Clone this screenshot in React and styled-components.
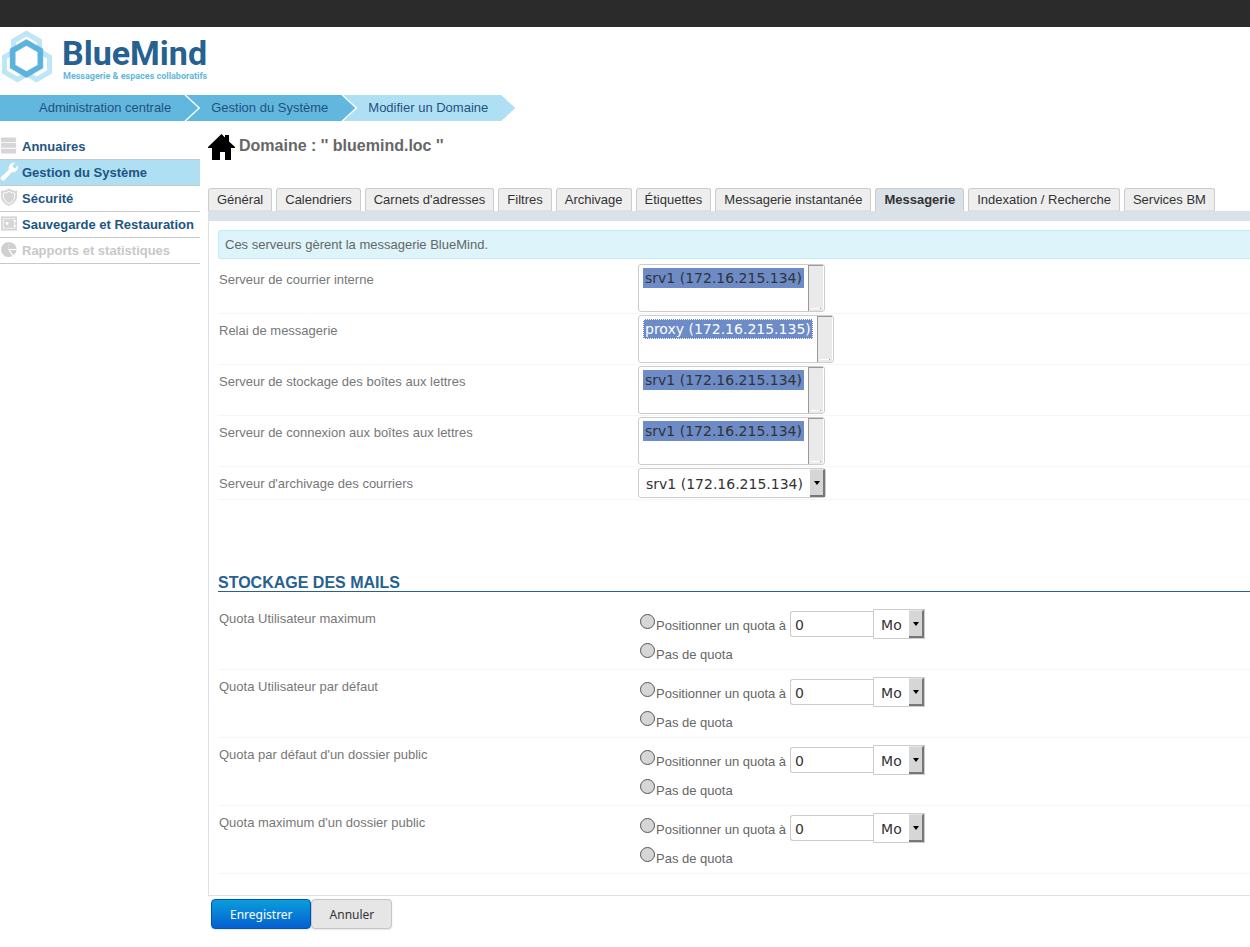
import React, { useState } from "react";
import styled, { createGlobalStyle, css } from "styled-components";

const sans = '"Liberation Sans", Arial, sans-serif';
const control = '"DejaVu Sans", sans-serif';

const GlobalStyle = createGlobalStyle`
  *, *::before, *::after { box-sizing: border-box; }
  body {
    margin: 0;
    background: #fff;
    color: #666;
    font: 13px/16px ${sans};
    overflow-x: hidden;
  }
  ul { margin: 0; padding: 0; list-style: none; }
  a { color: inherit; text-decoration: none; }
`;

const TopBar = styled.div`
  height: 27px;
  background: #2b2b2b;
`;

const Header = styled.header`
  display: flex;
  height: 68px;
  padding-top: 3px;
`;

const Hexagons = styled.svg`
  width: 54px;
  height: 54px;
  flex: none;
`;

const Brand = styled.div`
  display: flex;
  flex-direction: column;
  padding: 7px 0 0 8px;
  font-family: Roboto, "Liberation Sans", sans-serif;
  font-weight: bold;
  white-space: nowrap;
`;

const BrandName = styled.span`
  color: #26618f;
  font-size: 34px;
  line-height: 33px;
`;

const Tagline = styled.span`
  padding-left: 1px;
  color: #62b7de;
  font-size: 9px;
  line-height: 12px;
`;

const Crumbs = styled.ul`
  display: flex;
  height: 26px;
`;

const Crumb = styled.li`
  padding: 0 27px 0 25px;
  margin-left: -12px;
  background: ${(p) => (p.$current ? "#afdff3" : "#62b7de")};
  color: #1f5280;
  line-height: 26px;
  white-space: nowrap;
  clip-path: polygon(0 0, calc(100% - 14px) 0, 100% 50%, calc(100% - 14px) 100%, 0 100%, 14px 50%);
  &:first-child {
    margin-left: 0;
    padding-left: 39px;
    clip-path: polygon(0 0, calc(100% - 14px) 0, 100% 50%, calc(100% - 14px) 100%, 0 100%);
  }
`;

const Columns = styled.div`
  display: flex;
  align-items: flex-start;
  gap: 8px;
  padding-top: 13px;
`;

const SideNav = styled.nav`
  flex: none;
  width: 200px;
`;

const SideLink = styled.a`
  display: flex;
  align-items: center;
  gap: 4px;
  height: 26px;
  border-bottom: 1px solid #c8c8c8;
  background: ${(p) => (p.$active ? "#afdff3" : "transparent")};
  color: ${(p) => (p.$disabled ? "#c8c8c8" : "#1d5583")};
  font-weight: bold;
  white-space: nowrap;
  svg { flex: none; width: 18px; height: 20px; margin-top: -4px; }
`;

const Content = styled.main`
  flex: 1;
  min-width: 0;
`;

const PageTitle = styled.h1`
  display: flex;
  align-items: flex-start;
  gap: 4px;
  height: 54px;
  margin: 0;
  font-size: 16px;
  line-height: 24px;
  svg { width: 27px; height: 27px; }
`;

const Tabs = styled.div`
  display: flex;
  gap: 4px;
  border-bottom: 10px solid #dae2e8;
`;

const Tab = styled.button`
  height: 23px;
  padding: 0 8px;
  border: 1px solid #ccc;
  border-bottom-color: #dae2e8;
  border-radius: 3px 3px 0 0;
  background: ${(p) => (p.$active ? "#dae2e8" : "#eee")};
  color: #333;
  font: ${(p) => (p.$active ? "bold" : "normal")} 13px/21px ${sans};
  white-space: nowrap;
`;

const Panel = styled.section`
  padding: 9px 0 21px 9px;
  border-left: 1px solid #dae2e8;
  border-bottom: 1px solid #dae2e8;
`;

const Notice = styled.p`
  margin: 0 0 4px;
  padding: 6px 6px 5px;
  border: 1px solid #c1ebf6;
  border-right: 0;
  border-radius: 3px 0 0 3px;
  background: #ddf4fa;
`;

const Row = styled.div`
  display: grid;
  grid-template-columns: 420px 1fr;
  padding: ${(p) => (p.$tall ? "7px 0 0" : "1px 0")};
  min-height: ${(p) => (p.$tall ? "68px" : "0")};
  border-bottom: 1px solid #f6f6f6;
`;

const rowLabel = css`
  padding: ${(p) => (p.$tall ? "2px" : "8px")} 1px 0;
  color: #777;
`;
const RowLabel = styled.label`${rowLabel}`;
const RowCaption = styled.span`${rowLabel}`;

const ListFrame = styled.div`
  display: flex;
  justify-self: start;
  height: 48px;
  border: 1px solid #ccc;
  border-radius: 3px;
  background: #fff;
`;

const List = styled.select`
  height: 46px;
  padding: 3px 4px;
  border: 0;
  outline: 0;
  background: transparent;
  overflow: hidden;
  font: 14px/20px ${control};
  option {
    height: 20px;
    min-height: 20px;
    padding: ${(p) => (p.$focused ? "1px 1px 0" : "2px 2px 0")};
    border: ${(p) => (p.$focused ? "1px dotted #fff" : "0")};
    color: ${(p) => (p.$focused ? "#fff" : "#333")};
  }
  option:checked {
    background: #6c8bc7 linear-gradient(#6c8bc7, #6c8bc7);
    color: ${(p) => (p.$focused ? "#fff" : "#333")};
  }
`;

const ScrollTrack = styled.span`
  display: flex;
  align-items: flex-end;
  width: 15px;
  margin-right: 1px;
  padding: 0 2px 2px;
  border-top: 1px solid #999;
  border-left: 1px solid #999;
  background: #eaeaea;
  &::after { content: ""; flex: 1; height: 1px; background: #fff; border-right: 1px solid #999; }
`;

const DropFrame = styled.div`
  display: flex;
  justify-self: start;
  height: 30px;
  border: 1px solid #ccc;
  border-radius: ${(p) => (p.$square ? "0" : "3px")};
  background: #fff;
`;

const Drop = styled.select`
  appearance: none;
  padding: 2px 7px 0;
  border: 0;
  outline: 0;
  background: transparent;
  color: #333;
  font: 14px/20px ${control};
`;

const DropArrow = styled.span`
  display: flex;
  align-items: center;
  justify-content: center;
  width: 15px;
  border-top: 1px solid #e6e6e6;
  border-right: 2px solid #777;
  border-bottom: 2px solid #777;
  background: #d6d6d6;
  pointer-events: none;
  &::after {
    content: "";
    border: 3px solid transparent;
    border-top: 4px solid #000;
    border-bottom: 0;
  }
`;

const SectionTitle = styled.h2`
  margin: 74px 0 10px;
  border-bottom: 1px solid #26618f;
  color: #26618f;
  font-size: 16px;
  line-height: 17px;
  text-transform: uppercase;
`;

const Choice = styled.div`
  display: flex;
  align-items: center;
  min-height: 28px;
`;

const ChoiceLabel = styled.label`
  display: flex;
  align-items: flex-start;
  padding-left: 2px;
  margin-right: 4px;
  white-space: nowrap;
  span { padding-top: 4px; }
`;

const Radio = styled.input.attrs({ type: "radio" })`
  appearance: none;
  width: 15px;
  height: 15px;
  margin: 0 1px 0 0;
  border: 1px solid #555;
  border-radius: 50%;
  background: #d6d6d6;
  &:checked { background: radial-gradient(#333 3px, #d6d6d6 4px); }
`;

const QuotaInput = styled.input`
  width: 83px;
  height: 26px;
  padding: 2px 4px 0;
  border: 1px solid #ccc;
  border-right: 0;
  border-radius: 3px 0 0 3px;
  color: #333;
  font: 14px/20px ${control};
`;

const Actions = styled.div`
  display: flex;
  padding: 3px;
`;

const Button = styled.button`
  height: 30px;
  padding: 2px 17px 0 18px;
  border: 1px solid ${(p) => (p.$primary ? "#0055b3" : "#c5c5c5")};
  border-radius: 4px;
  background: ${(p) => (p.$primary ? "linear-gradient(#0a9ddd, #0460d0)" : "#e6e6e6")};
  box-shadow: 0 1px 2px rgba(0, 0, 0, 0.1);
  color: ${(p) => (p.$primary ? "#fff" : "#333")};
  font: 12px/20px "Noto Sans", sans-serif;
`;

const hex = (cx, cy, r) =>
  [[0, -1], [0.866, -0.5], [0.866, 0.5], [0, 1], [-0.866, 0.5], [-0.866, -0.5]]
    .map(([x, y]) => `${cx + x * r},${cy + y * r}`)
    .join(" ");

function Logo() {
  return (
    <Hexagons viewBox="0 0 54 54" fill="none" aria-hidden="true">
      <g stroke="#bde6f7" strokeWidth="5">
        <polygon points={hex(26.5, 18.5, 15)} />
        <polygon points={hex(17.5, 34.5, 15)} />
        <polygon points={hex(36.5, 34.5, 15)} />
      </g>
      <polygon points={hex(26.5, 28.5, 13)} fill="#fff" />
      <polygon points={hex(26.5, 28.5, 16)} stroke="#4b7f9c" strokeWidth="6" opacity="0.4" />
      <polygon points={hex(26.5, 28.5, 16)} stroke="#5ab4e0" strokeWidth="5" />
    </Hexagons>
  );
}

const icons = {
  directory: (
    <g fill="#d6d6d6">
      <rect x="1" y="2" width="16" height="5" rx="1" />
      <rect x="1" y="8" width="16" height="5" rx="1" />
      <rect x="1" y="14" width="16" height="5" rx="1" />
    </g>
  ),
  system: (
    <path fill="#fff" d="M1.600 19.400a2.200 2.200 0 0 1-.2-3.200L9.300 8.600C8.500 5.100 10.900 1.500 14.600 1l1.200.3-2.600 3.100.8 2 2.200.6 2.600-2.900c1.100 3.900-2.300 7.900-6.400 7.200L4.800 19.400a2.200 2.200 0 0 1-3.200 0z" />
  ),
  security: (
    <g>
      <path fill="#d6d6d6" d="M9.500 1C7 3 4 3.600 1 3.500V9c0 5 3.500 8.500 8.500 10.500C14.500 17.500 18 14 18 9V3.500C15 3.600 12 3 9.500 1z" />
      <path fill="#d6d6d6" stroke="#fff" d="M9.500 4C7.500 5.200 5.500 5.700 3.500 5.800V9c0 3.500 2.200 6.200 6 8 3.800-1.800 6-4.500 6-8V5.800c-2-.1-4-.6-6-1.800z" />
    </g>
  ),
  backup: (
    <g>
      <rect x="1" y="3" width="17" height="15" fill="#d6d6d6" />
      <rect x="3.500" y="5.500" width="12" height="10" fill="#d6d6d6" stroke="#f4f4f4" />
      <circle cx="7.500" cy="10.500" r="1.500" fill="#fff" />
      <path d="M15.500 7v2m0 3v2" stroke="#fff" strokeWidth="2" />
    </g>
  ),
  reports: (
    <g fill="#d0d0d0">
      <path d="M9 2.500a8 8 0 1 0 4 15L9 11z" />
      <path d="M9 2.500V10h8.500A8 8 0 0 0 9 2.500z" />
      <path d="M10.500 11l3.500 5.500a7 7 0 0 0 3.500-5.500z" />
    </g>
  ),
};

const sections = [
  { icon: "directory", label: "Annuaires" },
  { icon: "system", label: "Gestion du Système", active: true },
  { icon: "security", label: "Sécurité" },
  { icon: "backup", label: "Sauvegarde et Restauration" },
  { icon: "reports", label: "Rapports et statistiques", disabled: true },
];

const tabs = [
  "Général", "Calendriers", "Carnets d'adresses", "Filtres", "Archivage", "Étiquettes",
  "Messagerie instantanée", "Messagerie", "Indexation / Recherche", "Services BM",
];

const servers = [
  { id: "internal", label: "Serveur de courrier interne", host: "srv1 (172.16.215.134)" },
  { id: "relay", label: "Relai de messagerie", host: "proxy (172.16.215.135)", focused: true },
  { id: "storage", label: "Serveur de stockage des boîtes aux lettres", host: "srv1 (172.16.215.134)" },
  { id: "access", label: "Serveur de connexion aux boîtes aux lettres", host: "srv1 (172.16.215.134)" },
];

const quotas = [
  { id: "user-max", label: "Quota Utilisateur maximum" },
  { id: "user-default", label: "Quota Utilisateur par défaut" },
  { id: "public-default", label: "Quota par défaut d'un dossier public" },
  { id: "public-max", label: "Quota maximum d'un dossier public" },
];

function ServerRow({ id, label, host, focused }) {
  return (
    <Row>
      <RowLabel htmlFor={id}>{label}</RowLabel>
      <ListFrame>
        <List id={id} multiple size={2} defaultValue={[host]} $focused={focused}>
          <option value={host}>{host}</option>
        </List>
        <ScrollTrack />
      </ListFrame>
    </Row>
  );
}

function QuotaRow({ id, label }) {
  return (
    <Row $tall role="radiogroup" aria-labelledby={`${id}-caption`}>
      <RowCaption $tall id={`${id}-caption`}>{label}</RowCaption>
      <div>
        <Choice>
          <ChoiceLabel>
            <Radio name={id} value="limited" />
            <span>Positionner un quota à</span>
          </ChoiceLabel>
          <QuotaInput aria-label={`${label}, valeur`} defaultValue="0" />
          <DropFrame $square>
            <Drop aria-label={`${label}, unité`}>
              <option>Mo</option>
            </Drop>
            <DropArrow />
          </DropFrame>
        </Choice>
        <Choice>
          <ChoiceLabel>
            <Radio name={id} value="unlimited" />
            <span>Pas de quota</span>
          </ChoiceLabel>
        </Choice>
      </div>
    </Row>
  );
}

export default function App() {
  const [tab, setTab] = useState("Messagerie");
  return (
    <>
      <GlobalStyle />
      <TopBar />
      <Header>
        <Logo />
        <Brand>
          <BrandName>BlueMind</BrandName>
          <Tagline>Messagerie &amp; espaces collaboratifs</Tagline>
        </Brand>
      </Header>
      <Crumbs>
        <Crumb><a href="#admin">Administration centrale</a></Crumb>
        <Crumb><a href="#system">Gestion du Système</a></Crumb>
        <Crumb $current><a href="#domain">Modifier un Domaine</a></Crumb>
      </Crumbs>
      <Columns>
        <SideNav>
          {sections.map((s) => (
            <SideLink key={s.icon} href={`#${s.icon}`} $active={s.active} $disabled={s.disabled}>
              <svg viewBox="0 0 19 20" aria-hidden="true">{icons[s.icon]}</svg>
              {s.label}
            </SideLink>
          ))}
        </SideNav>
        <Content>
          <PageTitle>
            <svg viewBox="0 0 27 27" aria-hidden="true">
              <path d="M0 13L13.500 0l3.500 3.500V1h4v6.500l6 5.500v1h-4v12h-6v-8h-5v8H4V14H0z" />
            </svg>
            Domaine : '' bluemind.loc ''
          </PageTitle>
          <Tabs role="tablist">
            {tabs.map((t) => (
              <Tab key={t} type="button" role="tab" aria-selected={t === tab} $active={t === tab} onClick={() => setTab(t)}>
                {t}
              </Tab>
            ))}
          </Tabs>
          <Panel>
            <Notice>Ces serveurs gèrent la messagerie BlueMind.</Notice>
            {servers.map((s) => <ServerRow key={s.id} {...s} />)}
            <Row>
              <RowLabel htmlFor="archive">Serveur d'archivage des courriers</RowLabel>
              <DropFrame>
                <Drop id="archive">
                  <option>srv1 (172.16.215.134)</option>
                </Drop>
                <DropArrow />
              </DropFrame>
            </Row>
            <SectionTitle>Stockage des mails</SectionTitle>
            {quotas.map((q) => <QuotaRow key={q.id} {...q} />)}
          </Panel>
          <Actions>
            <Button type="submit" $primary>Enregistrer</Button>
            <Button type="button">Annuler</Button>
          </Actions>
        </Content>
      </Columns>
    </>
  );
}
